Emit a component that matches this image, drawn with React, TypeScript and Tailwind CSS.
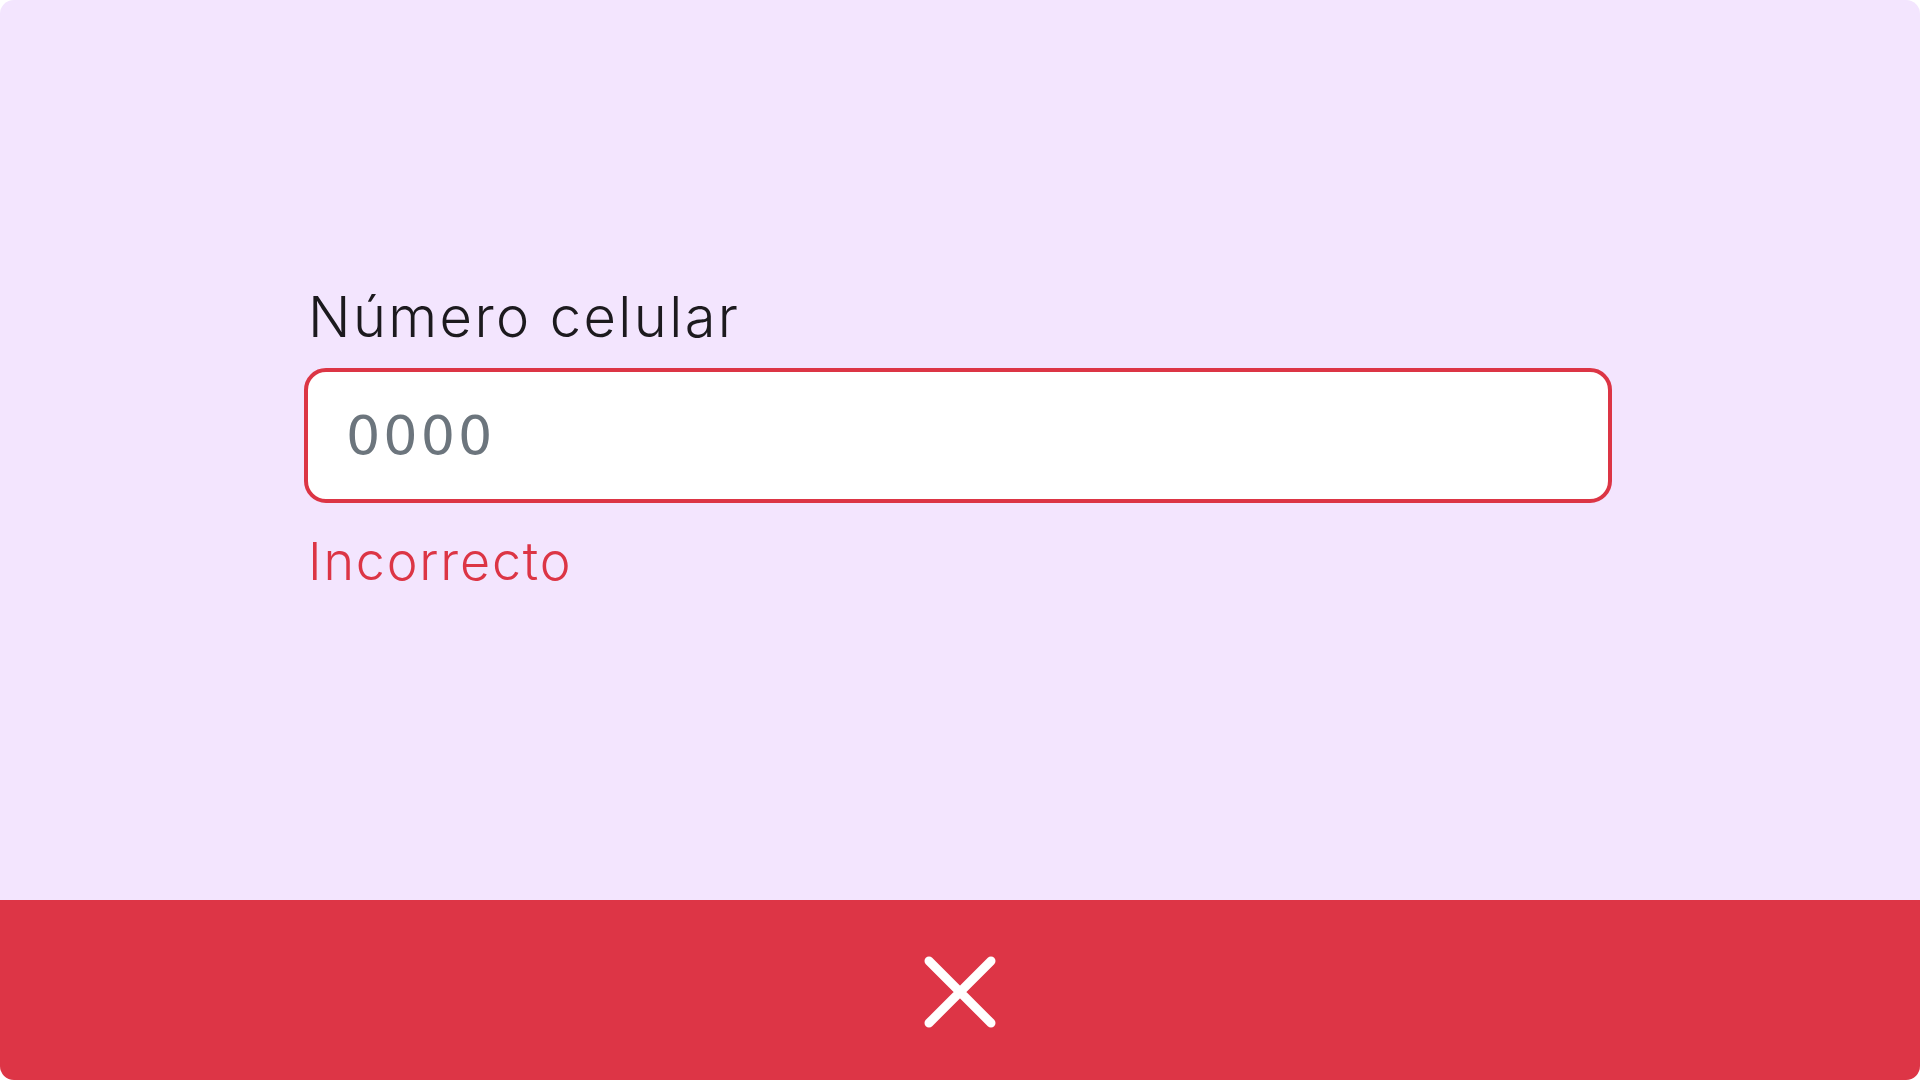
import React from 'react';

const CloseIcon = () => (
  <svg width="72" height="72" viewBox="0 0 72 72" fill="none">
    <path d="M5 5L67 67M67 5L5 67" stroke="#ffffff" strokeWidth="9" strokeLinecap="round" />
  </svg>
);

const App = () => {
  return (
    <div className="h-screen w-full bg-white">
      <div className="flex h-full w-full flex-col overflow-hidden rounded-[14px]">
        <div className="flex-1 bg-[#f3e5fe] pl-[304px] pt-[289px]">
          <div className="w-[1308px]" style={{ fontFamily: 'Inter, "Noto Sans", sans-serif' }}>
            <label className="block pl-[4px] text-[56px] font-light leading-none tracking-[2.4px] text-[#1c1a1e]">
              Número celular
            </label>
            <input
              type="text"
              placeholder="0000"
              className="mt-[23px] block h-[135px] w-full rounded-[22px] border-[4px] border-[#dc3545] bg-white pl-[38px] text-[54px] tracking-[3px] text-[#212529] outline-none placeholder:text-[#6c757d]"
              style={{ fontFamily: '"DejaVu Sans", sans-serif' }}
            />
            <div className="mt-[33px] pl-[4px] text-[52px] font-light leading-none tracking-[1.8px] text-[#dc3545]">
              Incorrecto
            </div>
          </div>
        </div>
        <div className="flex h-[180px] items-center justify-center bg-[#dd3546] pt-[4px]">
          <CloseIcon />
        </div>
      </div>
    </div>
  );
};

export default App;
